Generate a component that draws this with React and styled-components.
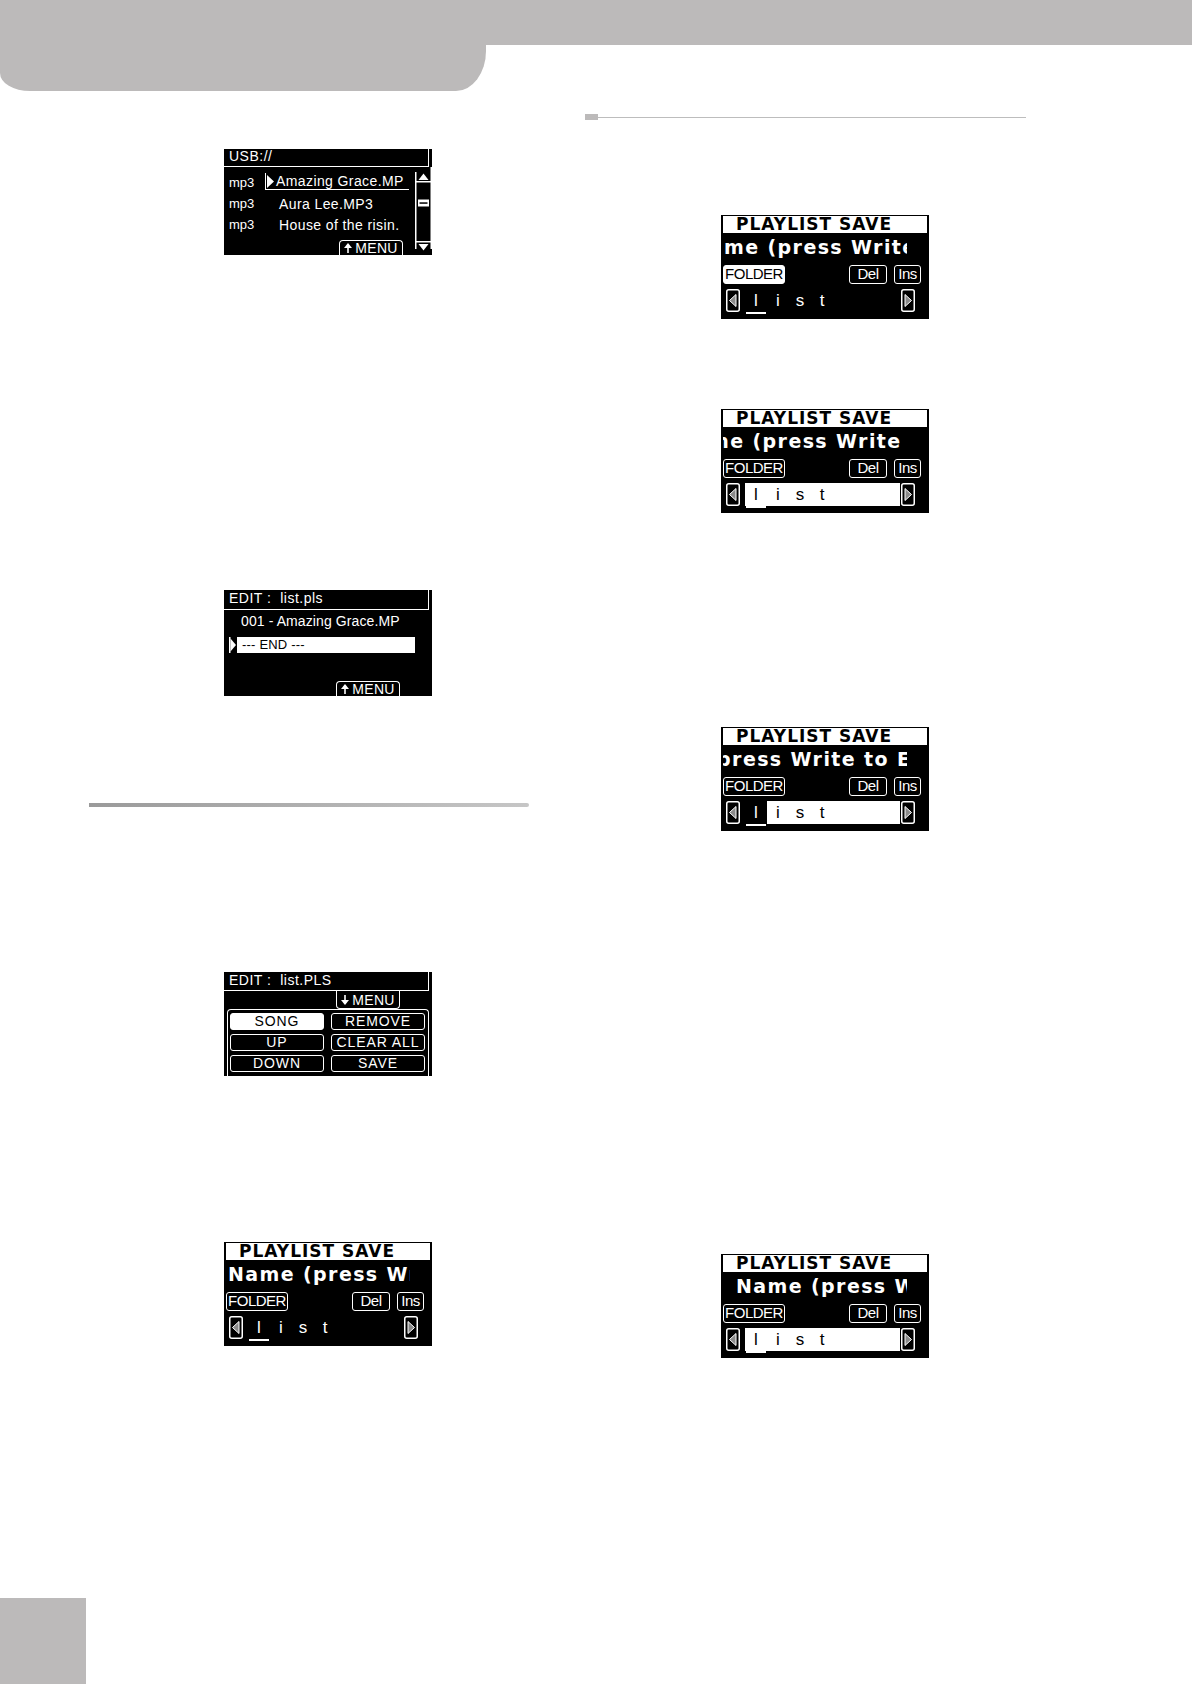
import React from "react";
import styled, { createGlobalStyle, css } from "styled-components";

const GRAY = "#bcbaba";

const GlobalStyle = createGlobalStyle`
  html, body { margin: 0; padding: 0; background: #fff; }
  body { font-family: "Liberation Sans", Arial, sans-serif; }
`;

const Page = styled.div`
  position: relative;
  width: 1192px;
  height: 1684px;
  overflow: hidden;
  display: flex;
  flex-direction: column;
  background: #fff;
`;

const Header = styled.header`
  flex: none;
`;

const Band = styled.div`
  height: 45px;
  background: ${GRAY};
`;

const Tab = styled.div`
  width: 486px;
  height: 46px;
  background: ${GRAY};
  border-radius: 0 0 30px 30px / 0 0 40px 18px;
`;

const Columns = styled.main`
  flex: 1;
  display: grid;
  grid-template-columns: 440px 441px;
  column-gap: 56px;
  padding-left: 89px;
  align-items: start;
`;

const Column = styled.section`
  display: flex;
  flex-direction: column;
`;

const Figure = styled.div`
  margin-top: ${(p) => p.$top}px;
  padding-left: ${(p) => p.$indent}px;
`;

const SectionRule = styled.div`
  margin-top: ${(p) => p.$top}px;
  height: 4px;
  background: linear-gradient(to right, #9a9a9a, #c6c6c6);
  border-radius: 0 2px 2px 0;
`;

const TopicRule = styled.div`
  margin-top: ${(p) => p.$top}px;
  display: flex;
  align-items: center;
`;

const RuleMark = styled.span`
  width: 13px;
  height: 6px;
  background: ${GRAY};
`;

const RuleLine = styled.span`
  flex: 1;
  height: 1px;
  background: #bdbdbd;
`;

const Footer = styled.footer`
  flex: none;
  width: 86px;
  height: 86px;
  background: ${GRAY};
`;

/* ---------- LCD screens ---------- */

const Lcd = styled.div`
  width: 208px;
  height: ${(p) => p.$h}px;
  box-sizing: border-box;
  background: #000;
  color: #fff;
  font-family: "Liberation Sans", Arial, sans-serif;
  display: flex;
  flex-direction: column;
  overflow: hidden;
`;

const LcdTitle = styled.div`
  flex: none;
  box-sizing: border-box;
  width: ${(p) => p.$w}px;
  height: ${(p) => p.$h}px;
  border-right: 1.5px solid #fff;
  border-bottom: 1.5px solid #fff;
  padding-left: 5px;
  font-size: 14px;
  line-height: ${(p) => p.$h - 3}px;
  letter-spacing: 0.5px;
  white-space: pre;
`;

const LcdBody = styled.div`
  flex: 1;
  display: flex;
  min-height: 0;
`;

const FileList = styled.div`
  flex: 1;
  display: flex;
  flex-direction: column;
  padding-top: 5px;
`;

const FileRow = styled.div`
  display: flex;
  align-items: center;
  height: 21px;
  font-size: 14px;
  letter-spacing: 0.4px;
  white-space: nowrap;
`;

const FileKind = styled.span`
  width: 36px;
  padding-left: 5px;
  font-size: 13px;
  letter-spacing: 0;
`;

const FileName = styled.span`
  display: flex;
  align-items: center;
  ${(p) =>
    p.$selected
      ? css`
          align-self: flex-start;
          margin-top: 1px;
          height: 17px;
          width: 144px;
          box-sizing: border-box;
          border-left: 1.5px solid #fff;
          border-bottom: 1.5px solid #fff;
          padding-left: 1px;
          gap: 2px;
        `
      : css`
          padding-left: 14px;
        `}
`;

const MenuRow = styled.div`
  display: flex;
  justify-content: flex-end;
  padding-right: ${(p) => p.$right}px;
  ${(p) => p.$pinned && "margin-top: auto;"}
`;

const MenuTab = styled.div`
  width: 64px;
  height: ${(p) => p.$h}px;
  box-sizing: border-box;
  border: 1.5px solid #fff;
  ${(p) =>
    p.$down
      ? css`
          border-top: none;
          border-radius: 0 0 4px 4px;
        `
      : css`
          border-bottom: none;
          border-radius: 4px 4px 0 0;
        `}
  display: flex;
  align-items: center;
  justify-content: center;
  gap: 3px;
  font-size: 14px;
  line-height: 1;
  letter-spacing: 0.3px;
`;

const EntryRow = styled.div`
  margin-top: 1px;
  height: 20px;
  padding-left: 17px;
  font-size: 14px;
  line-height: 20px;
  letter-spacing: 0.1px;
  white-space: nowrap;
`;

const EndRow = styled.div`
  margin-top: 6px;
  height: 16px;
  display: flex;
  padding-left: 5px;
`;

const EndBar = styled.div`
  width: 173px;
  margin-left: 1px;
  background: #fff;
  color: #000;
  font-size: 13px;
  line-height: 16px;
  padding-left: 5px;
  letter-spacing: 0.2px;
`;

const ButtonFrame = styled.div`
  flex: 1;
  margin-left: 3px;
  width: 202px;
  box-sizing: border-box;
  border: 1.5px solid #fff;
  border-bottom: none;
  border-radius: 4px 4px 0 0;
  display: grid;
  grid-template-columns: 94px 94px;
  column-gap: 7px;
  row-gap: 4px;
  padding: 2.5px 0 0 1.5px;
  align-content: start;
`;

const SoftKey = styled.div`
  height: 17px;
  box-sizing: border-box;
  border: 1.5px solid #fff;
  border-radius: 3px;
  font-size: 14px;
  line-height: 14px;
  text-align: center;
  letter-spacing: 0.9px;
  padding-left: 0.9px;
  white-space: nowrap;
  background: ${(p) => (p.$active ? "#fff" : "#000")};
  color: ${(p) => (p.$active ? "#000" : "#fff")};
`;

const SaveTitle = styled.div`
  flex: none;
  margin: 1px 2px 0;
  height: 17px;
  background: #fff;
  color: #000;
  padding-left: 13px;
  font-family: "DejaVu Sans", Verdana, sans-serif;
  font-weight: 700;
  font-size: 17px;
  line-height: 17px;
  letter-spacing: 1px;
  white-space: nowrap;
  overflow: hidden;
`;

const NameWindow = styled.div`
  flex: none;
  margin: 1px 0 0 2px;
  width: 184px;
  height: 26px;
  overflow: hidden;
  white-space: nowrap;
  font-family: "DejaVu Sans", Verdana, sans-serif;
  font-weight: 700;
  font-size: 19px;
  line-height: 26px;
  letter-spacing: 1.4px;
`;

const NameText = styled.span`
  display: inline-block;
  margin-left: ${(p) => p.$shift}px;
`;

const KeyRow = styled.div`
  flex: none;
  margin-top: 5px;
  height: 19px;
  display: flex;
  gap: 7px;
  padding: 0 8px 0 2px;
`;

const SaveKey = styled.div`
  width: ${(p) => p.$w}px;
  height: 19px;
  box-sizing: border-box;
  border: 1.5px solid #fff;
  border-radius: 3px;
  font-size: 15px;
  line-height: 16px;
  text-align: center;
  letter-spacing: -0.5px;
  ${(p) => p.$push && "margin-left: auto;"}
  background: ${(p) => (p.$active ? "#fff" : "#000")};
  color: ${(p) => (p.$active ? "#000" : "#fff")};
`;

const CharRow = styled.div`
  flex: none;
  margin-top: 5px;
  height: 23px;
  display: flex;
  align-items: flex-start;
  padding-left: 5px;
`;

const CharField = styled.div`
  margin: 0 1px 0 5px;
  width: 155px;
  height: 23px;
  display: flex;
`;

const CharCell = styled.span`
  width: 22px;
  height: 23px;
  text-align: center;
  font-size: 17px;
  line-height: 23px;
  background: ${(p) => (p.$lit ? "#fff" : "transparent")};
  color: ${(p) => (p.$lit ? "#000" : "#fff")};
  ${(p) => p.$cursor && "box-shadow: 0 3px 0 -1px #fff;"}
`;

const CharFill = styled.span`
  flex: 1;
  background: ${(p) => (p.$lit ? "#fff" : "transparent")};
`;

/* ---------- drawings ---------- */

const Pointer = () => (
  <svg width="7" height="13" viewBox="0 0 7 13">
    <polygon points="0,0 7,6.5 0,13" fill="#fff" />
  </svg>
);

const EndMarker = () => (
  <svg width="7" height="16" viewBox="0 0 7 16">
    <path d="M0.75 0V16" stroke="#fff" strokeWidth="1.5" />
    <polygon points="1.5,1.5 7,8 1.5,14.5" fill="#fff" />
  </svg>
);

const MenuArrow = ({ down }) => (
  <svg width="8" height="10" viewBox="0 0 8 10">
    <path d={down ? "M4 0V6" : "M4 10V4"} stroke="#fff" strokeWidth="1.6" />
    <polygon points={down ? "0,5 8,5 4,10" : "0,5 8,5 4,0"} fill="#fff" />
  </svg>
);

const ScrollBar = () => (
  <svg width="17" height="88" viewBox="0 0 17 88">
    <path d="M0.75 5V82M16.25 0V82" stroke="#fff" strokeWidth="1.5" />
    <polygon points="3.5,13 13.5,13 8.5,6.5" fill="#fff" />
    <path d="M0 14.75H17" stroke="#fff" strokeWidth="1.5" />
    <rect x="3" y="32.5" width="11" height="7" fill="#fff" />
    <rect x="4.5" y="35.3" width="8" height="1.5" fill="#000" />
    <path d="M0 74.75H17" stroke="#fff" strokeWidth="1.5" />
    <polygon points="3.5,77 13.5,77 8.5,83.5" fill="#fff" />
  </svg>
);

const ScrollArrow = ({ right }) => (
  <svg width="14" height="23" viewBox="0 0 14 23">
    <rect x="0.75" y="0.75" width="12.5" height="21.5" rx="2" fill="none" stroke="#fff" strokeWidth="1.5" />
    <polygon
      points={right ? "4,5.5 10.5,11.5 4,17.5" : "10,5.5 3.5,11.5 10,17.5"}
      fill="#8a8a8a"
      stroke="#fff"
      strokeWidth="1"
    />
  </svg>
);

/* ---------- screens ---------- */

function FileBrowser() {
  const files = [
    { name: "Amazing Grace.MP", selected: true },
    { name: "Aura Lee.MP3" },
    { name: "House of the risin." },
  ];
  return (
    <Lcd $h={106}>
      <LcdTitle $w={205} $h={18}>USB://</LcdTitle>
      <LcdBody>
        <FileList>
          {files.map((f) => (
            <FileRow key={f.name}>
              <FileKind>mp3</FileKind>
              <FileName $selected={f.selected}>
                {f.selected && <Pointer />}
                {f.name}
              </FileName>
            </FileRow>
          ))}
          <MenuRow $pinned $right={12}>
            <MenuTab $h={15}>
              <MenuArrow />
              MENU
            </MenuTab>
          </MenuRow>
        </FileList>
        <ScrollBar />
      </LcdBody>
    </Lcd>
  );
}

function PlaylistEdit() {
  return (
    <Lcd $h={106}>
      <LcdTitle $w={205} $h={20}>{"EDIT :  list.pls"}</LcdTitle>
      <EntryRow>001 - Amazing Grace.MP</EntryRow>
      <EndRow>
        <EndMarker />
        <EndBar>--- END ---</EndBar>
      </EndRow>
      <MenuRow $pinned $right={32}>
        <MenuTab $h={15}>
          <MenuArrow />
          MENU
        </MenuTab>
      </MenuRow>
    </Lcd>
  );
}

function PlaylistMenu() {
  const keys = ["SONG", "REMOVE", "UP", "CLEAR ALL", "DOWN", "SAVE"];
  return (
    <Lcd $h={104}>
      <LcdTitle $w={205} $h={19}>{"EDIT :  list.PLS"}</LcdTitle>
      <MenuRow $right={32}>
        <MenuTab $down $h={18}>
          <MenuArrow down />
          MENU
        </MenuTab>
      </MenuRow>
      <ButtonFrame>
        {keys.map((k) => (
          <SoftKey key={k} $active={k === "SONG"}>
            {k}
          </SoftKey>
        ))}
      </ButtonFrame>
    </Lcd>
  );
}

function PlaylistSave({ shift, folder, field }) {
  const chars = ["l", "i", "s", "t"];
  return (
    <Lcd $h={104}>
      <SaveTitle>PLAYLIST SAVE</SaveTitle>
      <NameWindow>
        <NameText $shift={shift}>Name (press Write to Enter)</NameText>
      </NameWindow>
      <KeyRow>
        <SaveKey $w={62} $active={folder}>FOLDER</SaveKey>
        <SaveKey $w={38} $push>Del</SaveKey>
        <SaveKey $w={27}>Ins</SaveKey>
      </KeyRow>
      <CharRow>
        <ScrollArrow />
        <CharField>
          {chars.map((c, i) => (
            <CharCell
              key={i}
              $cursor={i === 0}
              $lit={field === "all" || (field === "rest" && i > 0)}
            >
              {c}
            </CharCell>
          ))}
          <CharFill $lit={field !== "none"} />
        </CharField>
        <ScrollArrow right />
      </CharRow>
    </Lcd>
  );
}

export default function App() {
  return (
    <Page>
      <GlobalStyle />
      <Header>
        <Band />
        <Tab />
      </Header>
      <Columns>
        <Column>
          <Figure $top={58} $indent={135}>
            <FileBrowser />
          </Figure>
          <Figure $top={335} $indent={135}>
            <PlaylistEdit />
          </Figure>
          <SectionRule $top={107} />
          <Figure $top={165} $indent={135}>
            <PlaylistMenu />
          </Figure>
          <Figure $top={166} $indent={135}>
            <PlaylistSave shift={2} field="none" />
          </Figure>
        </Column>
        <Column>
          <TopicRule $top={23}>
            <RuleMark />
            <RuleLine />
          </TopicRule>
          <Figure $top={95} $indent={136}>
            <PlaylistSave shift={-30.5} folder field="none" />
          </Figure>
          <Figure $top={90} $indent={136}>
            <PlaylistSave shift={-45.5} field="all" />
          </Figure>
          <Figure $top={214} $indent={136}>
            <PlaylistSave shift={-91} field="rest" />
          </Figure>
          <Figure $top={423} $indent={136}>
            <PlaylistSave shift={13} field="all" />
          </Figure>
        </Column>
      </Columns>
      <Footer />
    </Page>
  );
}
